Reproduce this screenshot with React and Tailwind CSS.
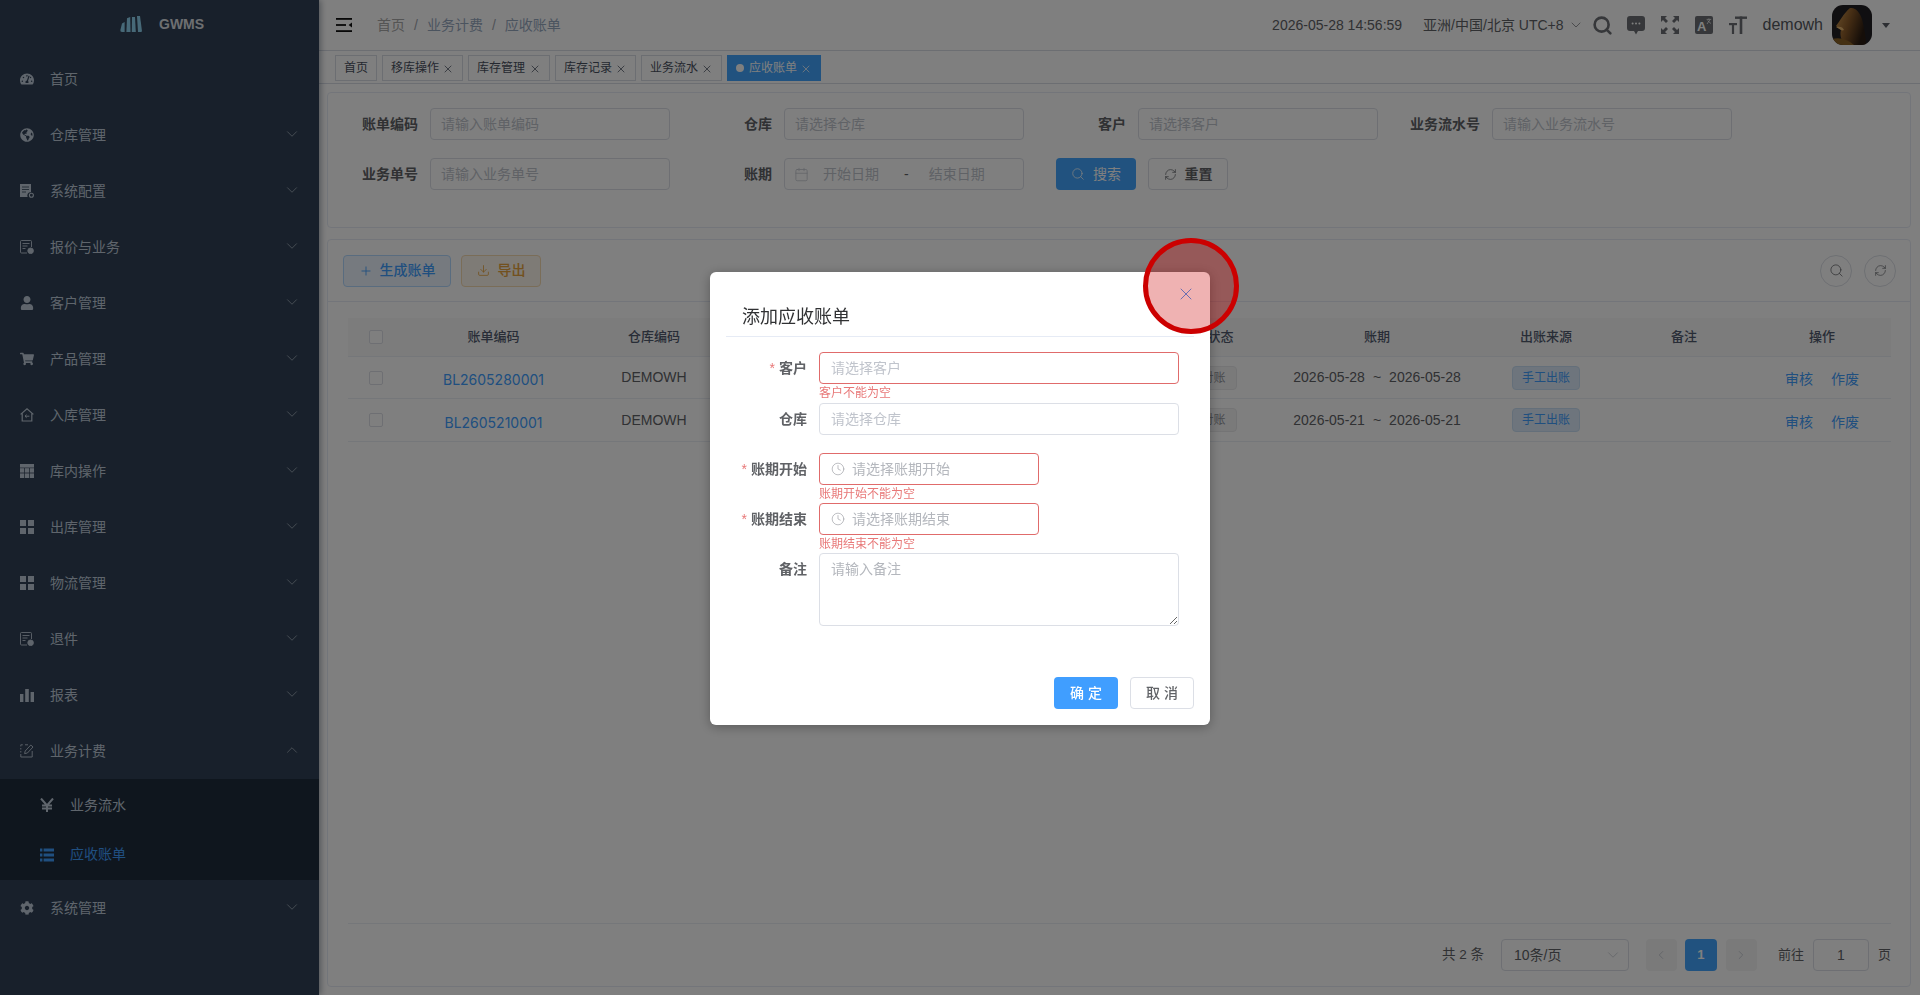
import React from "react";
import { ChevronDown, ChevronUp, ChevronLeft, ChevronRight, Search, RefreshCw, Plus, X, Clock, Calendar, Download } from "lucide-react";
import { FaTachometerAlt, FaGlobeAmericas, FaUser, FaShoppingCart, FaCog } from "react-icons/fa";

const IconConfig = () => (
  <svg width="14" height="14" viewBox="0 0 14 14" fill="currentColor">
    <path d="M0 0h11v8.2A3.4 3.4 0 0 0 7.6 13H0z" />
    <path d="M2 3h7M2 5.5h7M2 8h4" stroke="#304156" strokeWidth="0.8" />
    <circle cx="11.4" cy="11.2" r="2" fill="none" stroke="currentColor" strokeWidth="1.1" />
  </svg>
);
const IconBill = () => (
  <svg width="14" height="14" viewBox="0 0 14 14" fill="none" stroke="currentColor" strokeWidth="0.9">
    <path d="M7 13H1.5a1 1 0 0 1-1-1V1.5a1 1 0 0 1 1-1h9a1 1 0 0 1 1 1V7" />
    <path d="M2.5 3.5h7M2.5 6h5M2.5 8.5h3" />
    <circle cx="10.6" cy="10.8" r="2.8" fill="currentColor" />
  </svg>
);
const IconHome = () => (
  <svg width="14" height="14" viewBox="0 0 14 14" fill="none" stroke="currentColor" strokeWidth="1.2">
    <path d="M0.6 6.4 7 0.8l6.4 5.6M2.2 5.4V13h9.6V5.4" />
    <path d="M9.4 8.2H5M6.6 6.7 5 8.2l1.6 1.5" strokeWidth="1" />
  </svg>
);
const IconTable = () => (
  <svg width="14" height="14" viewBox="0 0 14 14" fill="currentColor">
    <rect width="14" height="3.6" />
    <rect y="4.2" width="4.2" height="4.4" /><rect x="4.9" y="4.2" width="4.2" height="4.4" /><rect x="9.8" y="4.2" width="4.2" height="4.4" />
    <rect y="9.4" width="4.2" height="4.6" /><rect x="4.9" y="9.4" width="4.2" height="4.6" /><rect x="9.8" y="9.4" width="4.2" height="4.6" />
  </svg>
);
const IconGrid = () => (
  <svg width="14" height="14" viewBox="0 0 14 14" fill="currentColor">
    <rect width="6" height="6" /><rect x="8" width="6" height="6" /><rect y="8" width="6" height="6" /><rect x="8" y="8" width="6" height="6" />
  </svg>
);
const IconBars = () => (
  <svg width="14" height="14" viewBox="0 0 14 14" fill="currentColor">
    <rect y="6" width="3.4" height="8" /><rect x="5.2" y="1" width="3.6" height="13" /><rect x="10.6" y="4" width="3.4" height="10" />
  </svg>
);
const IconEdit = () => (
  <svg width="14" height="14" viewBox="0 0 14 14" fill="none" stroke="currentColor" strokeWidth="0.9">
    <path d="M0.8 2.4V0.8h2M0.8 4v1.5M0.8 7v1.5M0.8 10v3h11.4V7" />
    <path d="M5 0.8h3" />
    <path d="M4.6 9.6 5.2 7l5.6-6 2.2 2-5.6 6z" />
  </svg>
);
const IconYen = () => (
  <svg width="14" height="14" viewBox="0 0 14 14" fill="none" stroke="currentColor" strokeWidth="2">
    <path d="M1 0.5 7 7.5l6-7M7 7v7M2 7.6h10M2 10.6h10" />
  </svg>
);
const IconList = () => (
  <svg width="14" height="14" viewBox="0 0 14 14" fill="currentColor">
    <rect y="0.5" width="2.4" height="3" /><rect x="3.6" y="0.5" width="10.4" height="3" />
    <rect y="5.5" width="2.4" height="3" /><rect x="3.6" y="5.5" width="10.4" height="3" />
    <rect y="10.5" width="2.4" height="3" /><rect x="3.6" y="10.5" width="10.4" height="3" />
  </svg>
);

const menus = [
  { label: "首页", icon: <FaTachometerAlt size={14} />, leaf: true },
  { label: "仓库管理", icon: <FaGlobeAmericas size={14} /> },
  { label: "系统配置", icon: <IconConfig /> },
  { label: "报价与业务", icon: <IconBill /> },
  { label: "客户管理", icon: <FaUser size={14} /> },
  { label: "产品管理", icon: <FaShoppingCart size={14} /> },
  { label: "入库管理", icon: <IconHome /> },
  { label: "库内操作", icon: <IconTable /> },
  { label: "出库管理", icon: <IconGrid /> },
  { label: "物流管理", icon: <IconGrid /> },
  { label: "退件", icon: <IconBill /> },
  { label: "报表", icon: <IconBars /> },
];

const MenuItem = ({ label, icon, leaf, open }) => (
  <div className="flex h-14 items-center pl-5 text-[14px] text-[#bfcbd9]">
    <span className="mr-4 flex w-[14px] justify-center">{icon}</span>
    <span>{label}</span>
    {!leaf && (open
      ? <ChevronUp size={18} strokeWidth={1} className="ml-auto mr-[18px] -translate-y-px text-[#a9b4c0]" />
      : <ChevronDown size={18} strokeWidth={1} className="ml-auto mr-[18px] -translate-y-px text-[#a9b4c0]" />)}
  </div>
);

const Sidebar = () => (
  <aside className="relative z-10 flex h-full w-[319px] shrink-0 flex-col bg-[#304156] shadow-[2px_0_6px_rgba(0,21,41,0.35)]">
    <div className="flex h-[51px] items-center pb-[3px] pl-[120px]">
      <svg width="22" height="16" viewBox="0 0 22 16" fill="#8fd3f0">
        <path d="M2 7.6 4.6 6v10H2Q0 16 .4 14z" />
        <path d="M7 2.2 10.2 1l.3 15H6.4z" />
        <path d="M12 1h3l.8 15h-4z" />
        <path d="M17 0h3l2 15.2-.8.8H18z" />
      </svg>
      <span className="ml-[17px] text-[14px] font-bold text-[#dcdfe2]">GWMS</span>
    </div>
    {menus.map((m) => <MenuItem key={m.label} {...m} />)}
    <MenuItem label="业务计费" icon={<IconEdit />} open />
    <div className="bg-[#1f2d3d] py-px text-[14px]">
      <div className="flex h-[50px] items-center pl-10 text-[#bfcbd9]">
        <span className="mr-4 flex w-[14px] justify-center"><IconYen /></span>业务流水
      </div>
      <div className="flex h-[49px] items-center pl-10 text-[#409eff]">
        <span className="mr-4 flex w-[14px] justify-center"><IconList /></span>应收账单
      </div>
    </div>
    <MenuItem label="系统管理" icon={<FaCog size={14} />} />
  </aside>
);

const Hamburger = () => (
  <svg width="16" height="14" viewBox="0 0 16 14" fill="#111">
    <rect width="16" height="1.8" />
    <rect y="6.1" width="10" height="1.8" />
    <rect y="12.2" width="16" height="1.8" />
    <path d="M16 4.6v4.8L12.6 7z" />
  </svg>
);

const iconFill = "#6c6f74";

const HeaderIcons = () => (
  <>
    <Search size={21} strokeWidth={3} className="ml-2 text-[#6c6f74]" />
    <svg className="ml-[14px]" width="18" height="19" viewBox="0 0 18 19" fill={iconFill}>
      <path d="M3 0h12a3 3 0 0 1 3 3v9a3 3 0 0 1-3 3h-4l-2 3.4L7 15H3a3 3 0 0 1-3-3V3a3 3 0 0 1 3-3z" />
      <circle cx="5.6" cy="7.6" r="1" fill="#fff" /><circle cx="9" cy="7.6" r="1" fill="#fff" /><circle cx="12.4" cy="7.6" r="1" fill="#fff" />
    </svg>
    <svg className="ml-4" width="18" height="18" viewBox="0 0 18 18" fill={iconFill}>
      <path d="M0 0h6L4 2l3 3-2 2-3-3-2 2zM18 0h-6l2 2-3 3 2 2 3-3 2 2zM0 18h6l-2-2 3-3-2-2-3 3-2-2zM18 18h-6l2-2-3-3 2-2 3 3 2-2z" />
    </svg>
    <svg className="ml-4" width="18" height="18" viewBox="0 0 18 18">
      <rect width="18" height="18" rx="2" fill={iconFill} />
      <text x="2" y="15" fontSize="13" fontWeight="700" fill="#fff" fontFamily="Liberation Sans">A</text>
      <path d="M11.6 3.4h4.6M13.9 2.4v1M15 3.6 12 8M12.6 4.6l3.4 3" stroke="#fff" strokeWidth="0.7" fill="none" />
    </svg>
    <svg className="ml-4" width="18" height="18" viewBox="0 0 18 18" fill={iconFill}>
      <rect x="6" y="0.5" width="12" height="2.4" />
      <rect x="10.7" y="0.5" width="2.6" height="17.5" />
      <rect x="0" y="7" width="8" height="2.2" />
      <rect x="2.9" y="7" width="2.2" height="11" />
    </svg>
  </>
);

const Avatar = () => (
  <svg className="ml-[9px] rounded-[11px]" width="40" height="40" viewBox="0 0 40 40">
    <defs>
      <linearGradient id="mane" x1="0" y1="0" x2="1" y2="0.4">
        <stop offset="0" stopColor="#d09a52" />
        <stop offset="0.5" stopColor="#8a5a28" />
        <stop offset="1" stopColor="#2a1c12" />
      </linearGradient>
    </defs>
    <rect width="40" height="40" fill="#201e22" />
    <path d="M34 40H13C8 34 8 28 9 25L4 21C8 16 11 9 18 3c6-1 10 5 12 11 2 8 4 18 4 26z" fill="url(#mane)" />
    <path d="M4 22c4-1 7 0 8 3-2 1-3 0-3 0z" fill="#e3b36c" />
    <path d="M0 34c8-2 15 0 22 6H0z" fill="#8a6226" />
  </svg>
);

const Header = () => (
  <header className="flex h-[51px] shrink-0 items-center border-b border-[#d8dce5] pl-[17px] pr-[30px] text-[14px]">
    <Hamburger />
    <div className="ml-[25px] flex items-center text-[#97a8be]">
      <span className="text-[#a8a8a8]">首页</span>
      <span className="mx-[9px] text-[#a0a4ac]">/</span>
      <span>业务计费</span>
      <span className="mx-[9px] text-[#a0a4ac]">/</span>
      <span>应收账单</span>
    </div>
    <span className="ml-auto text-[#606266]">2026-05-28 14:56:59</span>
    <span className="ml-[21px] text-[#606266]">亚洲/中国/北京 UTC+8</span>
    <ChevronDown size={16} strokeWidth={1} className="ml-1 text-[#606266]" />
    <HeaderIcons />
    <span className="ml-[16px] text-[16px] text-[#55585e]">demowh</span>
    <Avatar />
    <span className="ml-[10px] h-0 w-0 border-x-[4px] border-t-[5px] border-x-transparent border-t-[#5a5e66]" />
  </header>
);

const Tag = ({ label, active, closable = true, cls = "" }) => (
  <div className={`flex h-[26px] items-center justify-between border px-2 text-[12px] ${cls} ${active ? "border-[#42a5ff] bg-[#42a5ff] text-white" : "border-[#d8dce5] bg-white text-[#495060]"}`}>
    {active && <span className="mr-[5px] h-2 w-2 rounded-full bg-white" />}
    {label}
    {closable && <X size={12} strokeWidth={1.5} className="ml-[3px] mt-px" />}
  </div>
);

const TagsBar = () => (
  <div className="flex h-[33px] shrink-0 items-center gap-[5px] border-b border-[#d8dce5] pl-4 pt-[2px]">
    <Tag label="首页" closable={false} />
    <Tag label="移库操作" />
    <Tag label="库存管理" cls="w-[82px]" />
    <Tag label="库存记录" />
    <Tag label="业务流水" />
    <Tag label="应收账单" active />
  </div>
);

const inputCls = "h-8 rounded border border-[#dcdfe6] bg-white px-[11px] text-[14px] outline-none placeholder:text-[#c0c4cc]";
const filterInput = `${inputCls} w-[240px] pl-[10px]`;

const FilterItem = ({ label, children }) => (
  <div className="mr-[24px] flex w-[330px] items-center">
    <label className="w-[90px] shrink-0 pr-3 text-right text-[14px] font-bold text-[#606266]">{label}</label>
    {children}
  </div>
);

const FilterCard = () => (
  <div className="h-[136px] shrink-0 rounded border border-[#e6ebf5] pl-3 pt-[15px]">
    <div className="mb-[18px] flex">
      <FilterItem label="账单编码"><input className={filterInput} placeholder="请输入账单编码" readOnly /></FilterItem>
      <FilterItem label="仓库"><input className={filterInput} placeholder="请选择仓库" readOnly /></FilterItem>
      <FilterItem label="客户"><input className={filterInput} placeholder="请选择客户" readOnly /></FilterItem>
      <FilterItem label="业务流水号"><input className={filterInput} placeholder="请输入业务流水号" readOnly /></FilterItem>
    </div>
    <div className="flex">
      <FilterItem label="业务单号"><input className={filterInput} placeholder="请输入业务单号" readOnly /></FilterItem>
      <FilterItem label="账期">
        <div className="flex h-8 w-[240px] items-center rounded border border-[#dcdfe6] pl-[9px] text-[14px] text-[#c0c4cc]">
          <Calendar size={15} strokeWidth={1.2} />
          <span className="ml-[14px]">开始日期</span>
          <span className="ml-[25px] text-[#606266]">-</span>
          <span className="ml-[20px]">结束日期</span>
        </div>
      </FilterItem>
      <button className="ml-[8px] flex h-8 w-20 items-center justify-center gap-[8px] rounded bg-[#42a5ff] text-[14px] text-white">
        <Search size={14} strokeWidth={1.3} />搜索
      </button>
      <button className="ml-3 flex h-8 w-20 items-center justify-center gap-[8px] rounded border border-[#dcdfe6] text-[14px] font-bold text-[#606266]">
        <RefreshCw size={13} strokeWidth={1.3} />重置
      </button>
    </div>
  </div>
);

const cols = "grid grid-cols-[56px_179px_142px_413px_139px_200px_138px_138px_138px] items-center text-center";

const Check = () => <span className="mx-auto block h-[14px] w-[14px] rounded-[2px] border border-[#dcdfe6] bg-white" />;

const Row = ({ code, start, cls }) => (
  <div className={`${cols} ${cls} border-b border-[#ebeef5] text-[14px] text-[#606266]`}>
    <Check />
    <span className="mt-1 font-['Inter',sans-serif] text-[#409eff]">{code}</span>
    <span>DEMOWH</span>
    <span />
    <span><span className="inline-block h-6 w-[58px] rounded border border-[#e9e9eb] bg-[#f4f4f5] text-[12px] leading-[22px] text-[#909399]">未对账</span></span>
    <span>{start}<span className="mx-2">~</span>{start}</span>
    <span><span className="inline-block h-6 w-[68px] rounded border border-[#c8dff5] bg-[#dcebfa] text-[12px] leading-[22px] text-[#409eff]">手工出账</span></span>
    <span />
    <span className="mt-1 flex justify-center gap-[18px] text-[#409eff]"><span>审核</span><span>作废</span></span>
  </div>
);

const TableCard = () => (
  <div className="mt-[11px] flex min-h-0 flex-1 flex-col rounded border border-[#e6ebf5]">
    <div className="flex h-[62px] shrink-0 items-center border-b border-[#e6ebf5] pl-[15px] pr-[14px] text-[14px] font-medium">
      <button className="flex h-8 w-[108px] items-center justify-center gap-[7px] rounded border border-[#b3d8ff] bg-[#ecf5ff] text-[#409eff]">
        <Plus size={14} strokeWidth={1.5} />生成账单
      </button>
      <button className="ml-[10px] flex h-8 w-20 items-center justify-center gap-2 rounded border border-[#f5dab1] bg-[#fdf6ec] text-[#e6a23c]">
        <Download size={13} strokeWidth={1.5} />导出
      </button>
      <span className="ml-auto flex h-8 w-8 items-center justify-center rounded-full border border-[#dcdfe6] text-[#606266]"><Search size={15} strokeWidth={1.2} /></span>
      <span className="ml-3 flex h-8 w-8 items-center justify-center rounded-full border border-[#dcdfe6] text-[#606266]"><RefreshCw size={13} strokeWidth={1.2} /></span>
    </div>
    <div className="flex min-h-0 flex-1 flex-col pl-5 pr-[19px] pt-4">
      <div className={`${cols} h-[39px] border-b border-[#ebeef5] bg-[#f8f8f9] text-[13px] font-medium text-[#515a6e]`}>
        <Check />
        <span>账单编码</span><span>仓库编码</span><span /><span>对账状态</span><span>账期</span><span>出账来源</span><span>备注</span><span>操作</span>
      </div>
      <Row code="BL2605280001" start="2026-05-28" cls="h-[42px]" />
      <Row code="BL2605210001" start="2026-05-21" cls="h-[43px]" />
      <div className="mt-auto flex h-[63px] shrink-0 items-center justify-end border-t border-[#ebeef5] text-[13px] text-[#606266]">
        <span className="text-[13.5px]">共 2 条</span>
        <span className="ml-[17px] flex h-8 w-[128px] items-center justify-between rounded border border-[#dcdfe6] pl-[12px] pr-[6px] text-[14px]">10条/页<ChevronDown size={18} strokeWidth={1} className="text-[#c0c4cc]" /></span>
        <span className="ml-[17px] flex h-8 w-[31px] items-center justify-center rounded bg-[#f4f4f5] text-[#c0c4cc]"><ChevronLeft size={14} strokeWidth={1.4} /></span>
        <span className="ml-2 flex h-8 w-8 items-center justify-center rounded bg-[#42a5ff] font-bold text-white">1</span>
        <span className="ml-[9px] flex h-8 w-[31px] items-center justify-center rounded bg-[#f4f4f5] text-[#c0c4cc]"><ChevronRight size={14} strokeWidth={1.4} /></span>
        <span className="ml-[21px]">前往</span>
        <span className="ml-[9px] flex h-8 w-14 items-center justify-center rounded border border-[#dcdfe6] text-[14px]">1</span>
        <span className="ml-[9px]">页</span>
      </div>
    </div>
  </div>
);

const FormRow = ({ label, required, error, cls = "h-[50px]", children }) => (
  <div className={`flex ${cls}`}>
    <label className="w-[93px] shrink-0 pr-[12px] text-right text-[14px] font-bold leading-8 text-[#606266]">
      {required && <span className="mr-1 font-normal text-[#e87878]">*</span>}{label}
    </label>
    <div>
      {children}
      {error && <div className="mt-[2px] text-[12px] leading-[14px] text-[#e87878]">{error}</div>}
    </div>
  </div>
);

const TimeField = ({ placeholder }) => (
  <div className="flex h-8 w-[220px] items-center rounded border border-[#e06b6b] pl-[11px] text-[14px] text-[#b4b7bd]">
    <Clock size={14} strokeWidth={1} className="text-[#909399]" />
    <span className="ml-[7px]">{placeholder}</span>
  </div>
);

const Modal = () => (
  <div className="fixed inset-0 z-20 flex justify-center bg-black/50 pt-[272px]">
    <div className="relative h-[453px] w-[500px] rounded-md bg-white shadow-[0_2px_12px_rgba(0,0,0,0.3)]">
      <div className="mx-4 h-[65px] border-b border-[#e6ebf5] pl-4 pt-[33px] text-[18px] leading-6 text-[#303133]">添加应收账单</div>
      <X size={20} strokeWidth={1.2} className="absolute right-[14px] top-[12px] text-[#409eff]" />
      <div className="pl-4 pt-[15px]">
        <FormRow label="客户" required error="客户不能为空" cls="h-[51px]">
          <input className={`${inputCls} w-[360px] border-[#e06b6b] placeholder:text-[#b4b7bd]`} placeholder="请选择客户" readOnly />
        </FormRow>
        <FormRow label="仓库">
          <input className={`${inputCls} w-[360px] placeholder:text-[#b4b7bd]`} placeholder="请选择仓库" readOnly />
        </FormRow>
        <FormRow label="账期开始" required error="账期开始不能为空"><TimeField placeholder="请选择账期开始" /></FormRow>
        <FormRow label="账期结束" required error="账期结束不能为空"><TimeField placeholder="请选择账期结束" /></FormRow>
        <FormRow label="备注">
          <textarea className="block h-[73px] w-[360px] rounded border border-[#dcdfe6] px-[11px] py-[5px] text-[14px] outline-none placeholder:text-[#b4b7bd]" placeholder="请输入备注" readOnly />
        </FormRow>
      </div>
      <div className="absolute bottom-4 right-4 flex gap-3 text-[14px]">
        <button className="h-8 w-16 rounded bg-[#409eff] font-medium text-white">确 定</button>
        <button className="h-8 w-16 rounded border border-[#dcdfe6] bg-white font-medium text-[#606266]">取 消</button>
      </div>
    </div>
    <span className="absolute left-[1143px] top-[238px] h-24 w-24 rounded-full border-[5px] border-[#cc0000] bg-[#cc0000]/30" />
  </div>
);

export default function App() {
  return (
    <div className="relative flex h-screen w-screen overflow-hidden bg-white font-['Liberation_Sans','Noto_Sans_CJK_SC',sans-serif]">
      <Sidebar />
      <main className="flex min-w-0 flex-1 flex-col">
        <Header />
        <TagsBar />
        <div className="flex min-h-0 flex-1 flex-col pb-2 pl-2 pr-[9px] pt-2">
          <FilterCard />
          <TableCard />
        </div>
      </main>
      <Modal />
    </div>
  );
}
